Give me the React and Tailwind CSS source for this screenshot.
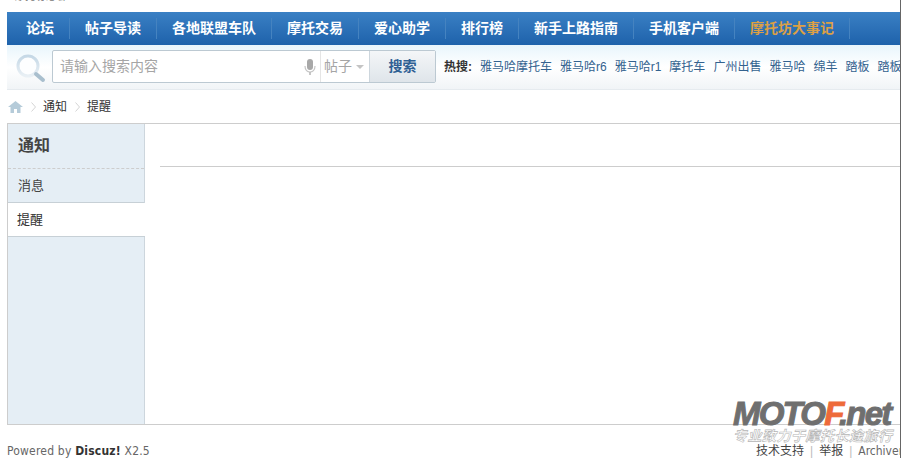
import React from 'react';

const cjk = { fontFamily: '"Liberation Sans", "Noto Sans CJK SC", sans-serif' };

const navItems = ['论坛', '帖子导读', '各地联盟车队', '摩托交易', '爱心助学', '排行榜', '新手上路指南', '手机客户端', '摩托坊大事记'];
const hotWords = ['雅马哈摩托车', '雅马哈r6', '雅马哈r1', '摩托车', '广州出售', '雅马哈', '绵羊', '踏板', '踏板'];

const SearchGlass = () => (
  <svg width="32" height="30" viewBox="0 0 32 30" className="shrink-0">
    <defs>
      <linearGradient id="glass" x1="0" y1="0" x2="0" y2="1">
        <stop offset="0" stopColor="#c5d8e6" />
        <stop offset="1" stopColor="#e9f0f5" />
      </linearGradient>
    </defs>
    <circle cx="13" cy="13" r="10" fill="#fdfeff" stroke="url(#glass)" strokeWidth="3" />
    <path d="M21 21 L28 27" stroke="#a9bfce" strokeWidth="4" strokeLinecap="round" />
  </svg>
);

const Mic = () => (
  <svg width="12" height="18" viewBox="0 0 12 18" className="shrink-0">
    <rect x="3" y="1" width="6" height="11" rx="3" fill="#a8a8a8" />
    <path d="M1 8 C1 16 11 16 11 8" fill="none" stroke="#c4c4c4" strokeWidth="1.2" />
    <path d="M6 14 V17" stroke="#b4b4b4" strokeWidth="1.5" />
  </svg>
);

const HomeIcon = () => (
  <svg width="15" height="12" viewBox="0 0 15 12" className="shrink-0">
    <path d="M7.5 0 L15 6 H12.5 V12 H9 V8 H6 V12 H2.5 V6 H0 Z" fill="#b5cbd9" />
  </svg>
);

const Chevron = () => (
  <svg width="5" height="10" viewBox="0 0 5 10" className="shrink-0">
    <path d="M0.5 0.5 L4.5 5 L0.5 9.5" fill="none" stroke="#d4d4d4" strokeWidth="1" />
  </svg>
);

const App = () => {
  return (
    <div className="w-[901px] h-[458px] overflow-hidden relative bg-white border-r border-[#666]" style={cjk}>
      <div className="h-[12px] overflow-hidden pl-[15px]">
        <div className="-mt-[9px] text-[10px] leading-[12px] text-[#777]">摩托坊论坛</div>
      </div>

      <div className="ml-[7px] h-[33px] flex items-center pl-[4px] bg-gradient-to-b from-[#3a80c4] to-[#1e62ab]">
        {navItems.map((item, i) => (
          <div key={i} className="h-[21px] flex items-center px-[15px] border-r border-[#4583c0] shrink-0">
            <span className={`text-[14px] font-bold whitespace-nowrap ${i === 8 ? 'text-[#dca045]' : 'text-white'}`}>{item}</span>
          </div>
        ))}
      </div>

      <div className="ml-[7px] h-[45px] flex items-start pl-[8px] pt-[5px] bg-gradient-to-b from-[#e8f5fc] via-[#ffffff] to-[#f1f4f7] border-b border-[#e6ebef]">
        <div className="w-[37px] shrink-0 pt-[3px]"><SearchGlass /></div>
        <div className="w-[384px] h-[33px] flex shrink-0 border border-[#bcc9d2] rounded-[2px] bg-white">
          <div className="w-[247px] flex items-center pl-[7px] text-[14px] text-[#a5a5a5]">请输入搜索内容</div>
          <div className="w-[20px] flex items-center justify-center"><Mic /></div>
          <div className="w-[49px] flex items-center pl-[3px] gap-[4px] border-l border-[#e5e5e5] text-[14px] text-[#a5a5a5]">
            <span>帖子</span>
            <span className="w-0 h-0 border-x-[4px] border-x-transparent border-t-[4px] border-t-[#c4c4c4]" />
          </div>
          <div className="flex-1 flex items-center justify-center border-l border-[#cdd6dd] bg-gradient-to-b from-[#f4f6f8] to-[#dfe5ea] text-[14px] font-bold text-[#2f6094]">搜索</div>
        </div>
        <div className="ml-[8px] h-[33px] flex items-center gap-[8px] text-[12px] whitespace-nowrap">
          <strong className="text-[#333] font-bold">热搜:</strong>
          {hotWords.map((word, i) => (
            <span key={i} className="text-[#33628f]">{word}</span>
          ))}
        </div>
      </div>

      <div className="h-[33px] ml-[8px] flex items-center text-[12px] text-[#333]">
        <HomeIcon />
        <span className="mx-[7.5px]"><Chevron /></span>
        <span>通知</span>
        <span className="mx-[7.5px]"><Chevron /></span>
        <span>提醒</span>
      </div>

      <div className="ml-[7px] h-[302px] flex border-y border-[#cdcdcd] border-l">
        <div className="w-[137px] shrink-0 flex flex-col bg-[#e5eef5] border-r border-[#cdd6dd]">
          <div className="h-[45px] flex items-center pl-[10px] border-b border-dashed border-[#cdcdcd] text-[16px] font-bold text-[#444]">通知</div>
          <div className="h-[34px] flex items-center pl-[10px] text-[13px] text-[#444] border-b border-[#c7d0d6]">消息</div>
          <div className="h-[34px] flex items-center pl-[9px] text-[13px] text-[#333] bg-white border-b border-[#c7d0d6] mr-[-1px]">提醒</div>
        </div>
        <div className="flex-1 pl-[15px] pt-[42px]">
          <div className="border-t border-[#cdcdcd]" />
        </div>
      </div>

      <div className="h-[33px] pl-[7px] pt-[18px] flex justify-between text-[12px] leading-[16px] text-[#666]">
        <div className="whitespace-nowrap tracking-[0.2px]" style={{ fontFamily: '"DejaVu Sans Condensed", "DejaVu Sans", sans-serif' }}>Powered by <strong className="text-[#333]">Discuz!</strong> X2.5</div>
        <div className="flex items-center whitespace-nowrap gap-[6px] text-[#444] shrink-0 w-[144px] overflow-hidden">
          <span>技术支持</span>
          <span className="text-[#bbb]">|</span>
          <span>举报</span>
          <span className="text-[#bbb]">|</span>
          <span className="text-[#666]" style={{ fontFamily: '"DejaVu Sans Condensed", "DejaVu Sans", sans-serif' }}>Archiver</span>
        </div>
      </div>

      <div className="absolute left-[733px] top-[399px] w-[166px] pointer-events-none">
        <div className="text-[33px] leading-[30px] font-bold italic tracking-[-1.8px] text-[#6f6f6f] whitespace-nowrap" style={{ WebkitTextStroke: '1px #6f6f6f' }}>
          MOTO<span className="text-[#ee6a3a]" style={{ WebkitTextStroke: '1px #ee6a3a' }}>F</span>.net
        </div>
        <div className="text-[14px] leading-[14px] italic font-bold tracking-[0.5px] text-white whitespace-nowrap" style={{ WebkitTextStroke: '0.6px #b5b5b5' }}>专业致力于摩托长途旅行</div>
      </div>
    </div>
  );
};

export default App;
